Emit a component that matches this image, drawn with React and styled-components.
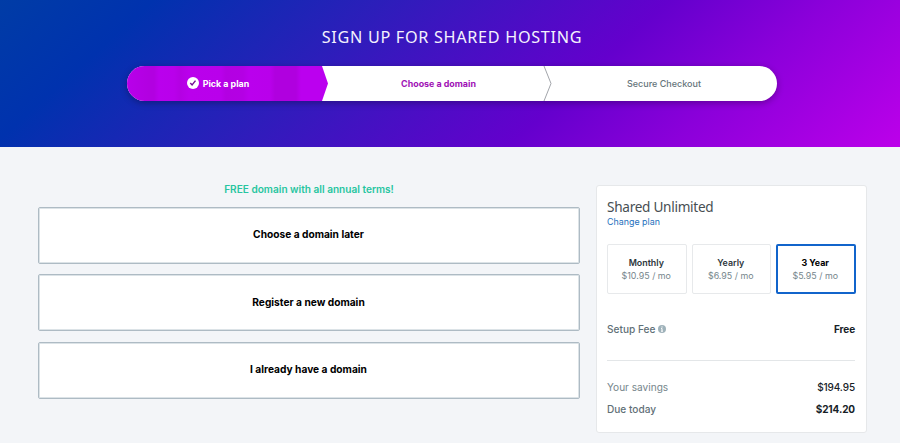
import React, {useState} from 'react';
import styled, {createGlobalStyle} from 'styled-components';

const GlobalStyle = createGlobalStyle`
  * {
    box-sizing: border-box;
  }

  body {
    margin: 0;
    background: #f3f5f8;
    font-family: Inter, "Liberation Sans", sans-serif;
    color: #000;
  }
`

const Header = styled.header`
  height: 147px;
  padding-top: 25px;
  display: flex;
  flex-direction: column;
  align-items: center;
  background: linear-gradient(138deg, #003ca6 0%, #0032ae 14.5%, #2c1eba 36%, #6400cd 63%, #8b00da 78%, #bc00ea 100%);
`

const Title = styled.h1`
  margin: 0 0 16px 4px;
  font: 400 16.2px/25px "Noto Sans", sans-serif;
  letter-spacing: 0.7px;
  text-transform: uppercase;
  white-space: nowrap;
  color: #f4f2fd;
`

const Steps = styled.ol`
  display: grid;
  grid-template-columns: 201px 223px 226px;
  width: 650px;
  height: 35px;
  margin: 0 0 0 4px;
  padding: 0;
  list-style: none;
  overflow: hidden;
  border-radius: 18px;
  background: #fff;
  box-shadow: 0 2px 7px rgba(0, 0, 0, 0.3);
`

const Step = styled.li`
  grid-column: ${({$column}) => $column};
  grid-row: 1;
  display: flex;
  align-items: center;
  justify-content: center;
  gap: 4px;
  padding: 0 ${({$shift}) => $shift || 0}px 1px 0;
  font-size: ${({$state}) => $state === 'next' ? 9 : 8.9}px;
  font-weight: ${({$state}) => $state === 'next' ? 500 : 700};
  white-space: nowrap;
  color: ${({$state}) => ({done: '#fff', current: '#a011b5', next: '#66757b'})[$state]};

  ${({$state}) => $state === 'done' && `
    clip-path: polygon(0 0, 195px 0, 100% 50%, 195px 100%, 0 100%);
    background: linear-gradient(90deg, #b800ea 0, #b200e1 22px, #b200e1 27px, #ba00ed 32px, #b900eb 47px, #b400e3 53px, #ba00ec 62px, #b900eb 94px, #b300e2 99px, #b400e4 116px, #ba00ed 122px, #b900eb 143px, #b000df 148px, #b000df 169px, #bb00ef 174px);
  `}
`

const Arrow = styled.svg`
  grid-area: 1 / 3;
  justify-self: start;
  margin-left: -8px;
`

const Main = styled.main`
  display: grid;
  grid-template-columns: 542px 271px;
  gap: 16px;
  align-items: start;
  padding: 38px 33px 0 38px;
`

const Promo = styled.p`
  margin: 0;
  height: 21.5px;
  font-size: 10.1px;
  font-weight: 600;
  line-height: 9px;
  text-align: center;
  color: #27c5a0;
`

const Options = styled.div`
  display: grid;
  gap: 10.7px;
`

const Option = styled.button`
  height: 57px;
  padding: 0 1px 2px 0;
  border: 1.5px solid #aebbc4;
  box-shadow: inset 0 0 0 1px #dce3e7;
  border-radius: 2px;
  background: #fff;
  font: 700 10.2px Inter, sans-serif;
  color: #000;
  cursor: pointer;
`

const Summary = styled.aside`
  height: 248px;
  padding: 10px 11px 0 10px;
  border: 1px solid #e6e8ea;
  border-radius: 3px;
  background: #fff;
`

const PlanName = styled.h2`
  margin: 0;
  font: 400 13.6px/22px "Noto Sans", sans-serif;
  letter-spacing: -0.28px;
  color: #474e52;
`

const ChangeLink = styled.a`
  display: block;
  height: 26px;
  font-size: 8.9px;
  line-height: 8px;
  color: #2470bd;
`

const Terms = styled.div`
  display: grid;
  grid-template-columns: repeat(3, 1fr);
  gap: 5px;
  width: 248.5px;
`

const Term = styled.button`
  height: 50px;
  padding: 0 1px 1px 0;
  border: ${({$active}) => $active ? '2px solid #1164cb' : '1px solid #e7e9eb'};
  border-radius: 2px;
  background: #fff;
  font: 400 8.9px/13px Inter, sans-serif;
  white-space: nowrap;
  color: #76868c;
  cursor: pointer;

  strong {
    display: block;
    font-weight: ${({$active}) => $active ? 700 : 600};
    color: ${({$active}) => $active ? '#000' : '#2d363c'};
  }
`

const Line = styled.div`
  display: flex;
  justify-content: space-between;
  height: 22px;
  line-height: 22px;
  font-size: 10.1px;
  font-weight: ${({$muted}) => $muted ? 400 : 500};
  color: ${({$muted}) => $muted ? '#76868c' : '#5f7077'};

  span {
    display: flex;
    align-items: center;
    gap: 3px;
  }

  b {
    font-size: 10px;
    line-height: 23px;
    font-weight: ${({$muted}) => $muted ? 500 : 700};
    letter-spacing: -0.1px;
    color: #162127;
  }
`

const Fees = styled.div`
  margin: 24px 0 15px;
  padding-bottom: 20px;
  border-bottom: 1px solid #e3e6e8;
`

const CheckIcon = () => <svg width="12" height="12" viewBox="0 0 12 12">
  <circle cx="6" cy="6" r="6" fill="#fff"/>
  <path d="M3.3 6 5.1 8 8.5 3.6" fill="none" stroke="#740b96" strokeWidth="1.4"/>
</svg>

const InfoIcon = () => <svg width="8" height="8" viewBox="0 0 8 8">
  <circle cx="4" cy="4" r="4" fill="#9fb2ba"/>
  <path d="M4 1.4v1.2M3.1 3.5H4v2.7M3 6.2h2" fill="none" stroke="#fff"/>
</svg>

const options = ['Choose a domain later', 'Register a new domain', 'I already have a domain']

const terms = [
  {name: 'Monthly', price: '$10.95'},
  {name: 'Yearly', price: '$6.95'},
  {name: '3 Year', price: '$5.95'},
]

const App = () => {
  const [term, setTerm] = useState('3 Year')

  return <>
    <GlobalStyle/>
    <Header>
      <Title>Sign up for shared hosting</Title>
      <Steps>
        <Step $column={1} $state="done" $shift={19}><CheckIcon/>Pick a plan</Step>
        <Step $column={2} $state="current" $shift={2}>Choose a domain</Step>
        <Step $column={3} $state="next">Secure Checkout</Step>
        <Arrow width="10" height="35" viewBox="0 0 10 35">
          <path d="M1 0 8 17.5 1 35" fill="none" stroke="#a2a5aa" strokeWidth="1"/>
        </Arrow>
      </Steps>
    </Header>
    <Main>
      <section>
        <Promo>FREE domain with all annual terms!</Promo>
        <Options>
          {options.map(option => <Option key={option}>{option}</Option>)}
        </Options>
      </section>
      <Summary>
        <PlanName>Shared Unlimited</PlanName>
        <ChangeLink>Change plan</ChangeLink>
        <Terms>
          {terms.map(({name, price}) => <Term key={name} $active={term === name} onClick={() => setTerm(name)}>
            <strong>{name}</strong>
            {price} / mo
          </Term>)}
        </Terms>
        <Fees>
          <Line><span>Setup Fee <InfoIcon/></span><b>Free</b></Line>
        </Fees>
        <Line $muted>Your savings<b>$194.95</b></Line>
        <Line>Due today<b>$214.20</b></Line>
      </Summary>
    </Main>
  </>
}

export default App;
